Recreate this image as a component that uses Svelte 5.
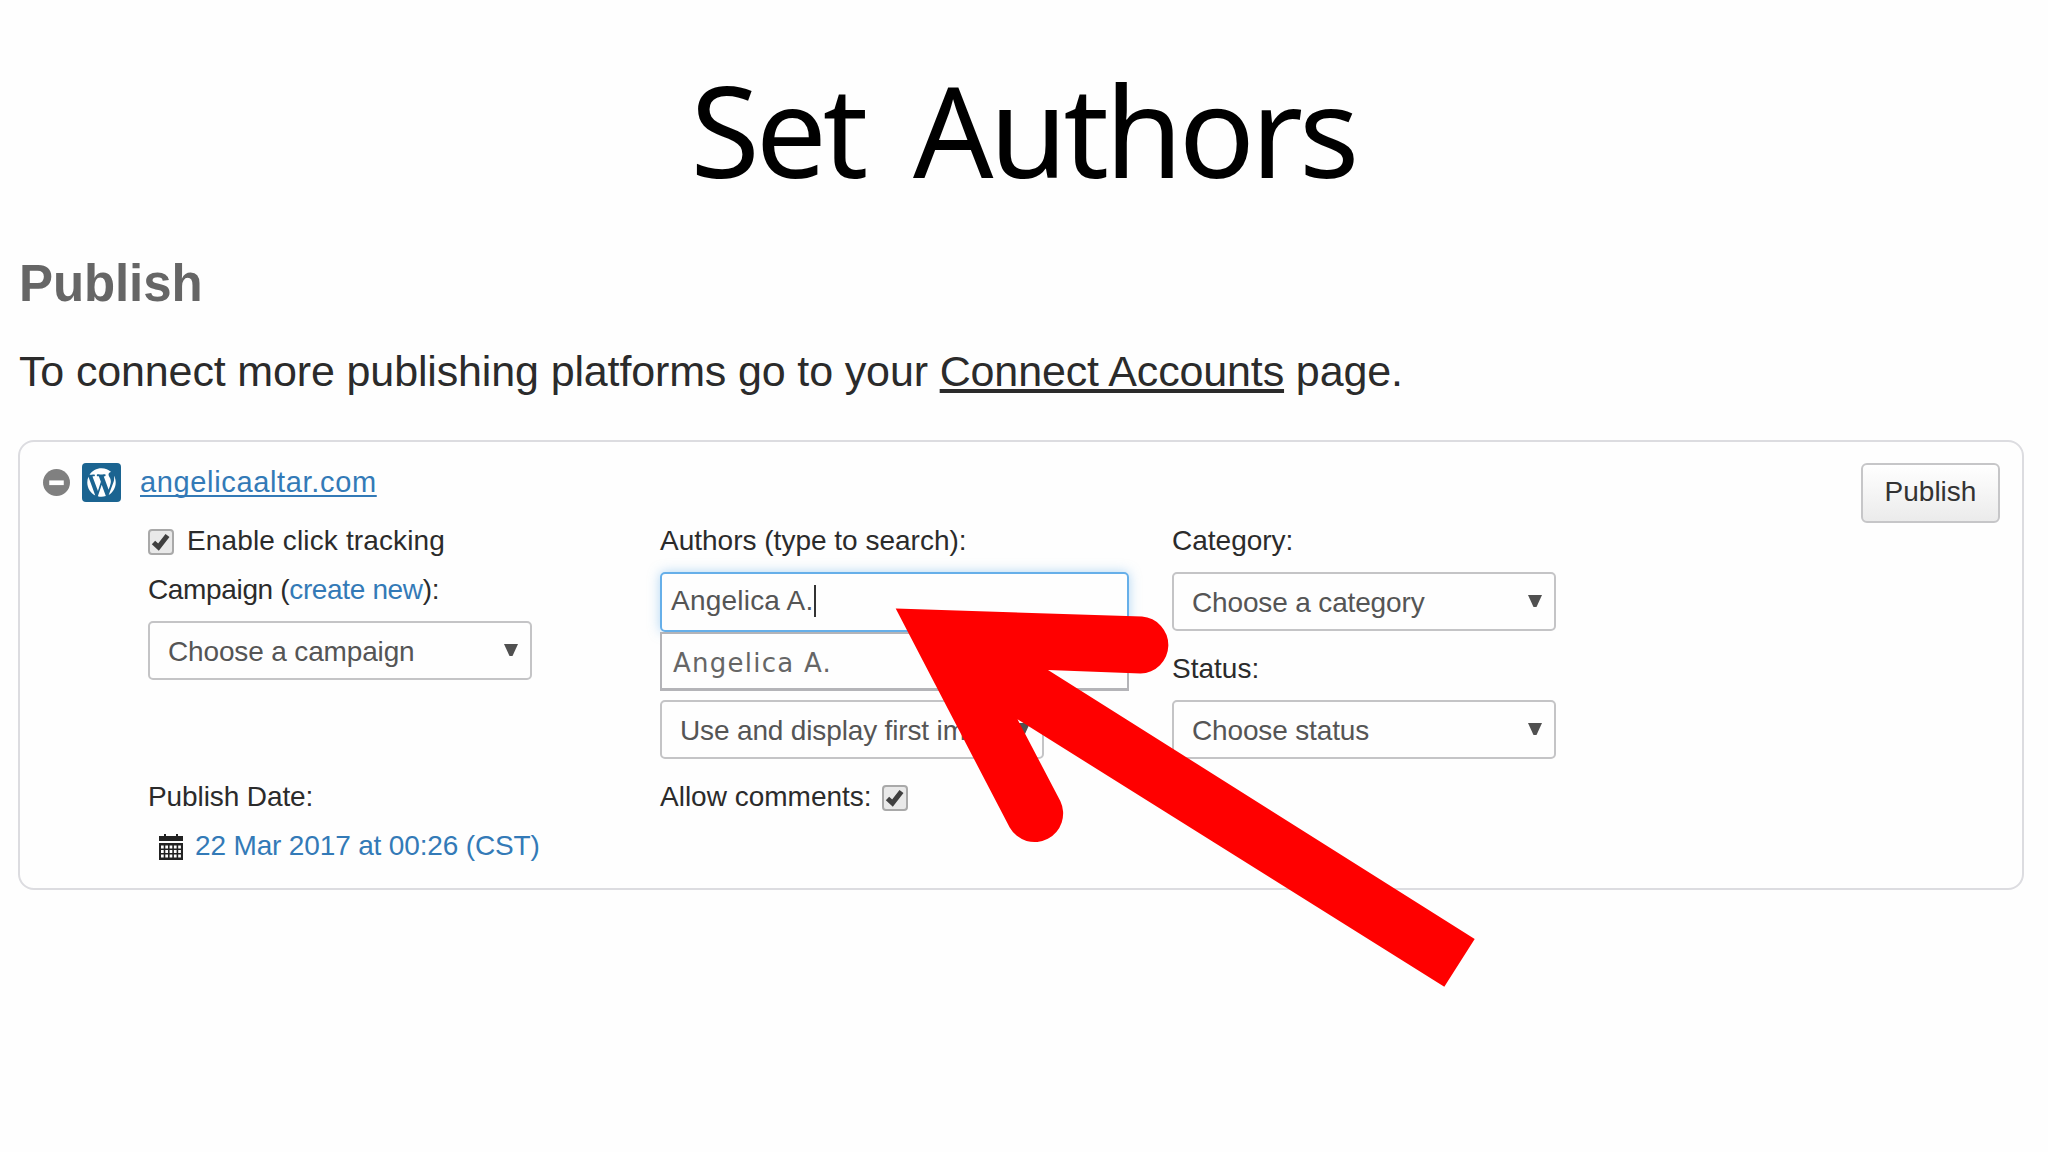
<script>
  let authorQuery = $state("Angelica A.");
  let suggestions = ["Angelica A."];
</script>

{#snippet checkbox()}
  <svg class="checkbox" viewBox="0 0 26 26">
    <rect x="1" y="1" width="24" height="24" rx="3" />
    <path d="M5.5 13.5 L10.5 18 L19.5 6.5" />
  </svg>
{/snippet}

{#snippet select(text)}
  <div class="select">
    <span>{text}</span>
    <svg class="caret" viewBox="0 0 14 12"><path d="M0 0H14L8.5 12H5.5Z" /></svg>
  </div>
{/snippet}

<div class="slide">
  <h1>Set Authors</h1>
  <h2>Publish</h2>
  <p class="intro">
    To connect more publishing platforms go to your <a href="#accounts">Connect Accounts</a> page.
  </p>

  <section class="card">
    <div class="head">
      <div class="site">
        <svg class="minus" viewBox="0 0 26 26">
          <circle cx="13" cy="13" r="13" />
          <rect x="6" y="11" width="14" height="4.5" />
        </svg>
        <svg class="wp" viewBox="0 0 39 39">
          <rect width="39" height="39" rx="4" />
          <g transform="translate(3.5 3.5) scale(1.6)">
            <path d="M7.78 15.37L4.37 6.22c.55-.02 1.17-.08 1.17-.08.5-.06.44-1.13-.06-1.11 0 0-1.45.11-2.37.11-.18 0-.37 0-.58-.01C4.12 2.69 6.87 1.11 10 1.11c2.33 0 4.45.87 6.05 2.34-.68-.11-1.65.39-1.65 1.58 0 .74.45 1.36.9 2.1.35.61.55 1.36.55 2.46 0 1.49-1.4 5-1.4 5l-3.03-8.37c.54-.02.82-.17.82-.17.5-.05.44-1.25-.06-1.22 0 0-1.44.12-2.38.12-.87 0-2.33-.12-2.33-.12-.5-.03-.56 1.2-.06 1.22l.92.08 1.26 3.41z" />
            <path d="M17.41 10c.24-.64.74-1.87.43-4.25.7 1.29 1.05 2.71 1.05 4.25 0 3.29-1.73 6.24-4.4 7.78.97-2.59 1.94-5.2 2.92-7.78z" />
            <path d="M6.1 18.09C3.12 16.65 1.11 13.53 1.11 10c0-1.3.23-2.48.72-3.59C3.25 10.3 4.67 14.2 6.1 18.09z" />
            <path d="M10.13 11.46l2.58 6.98c-.86.29-1.76.45-2.71.45-.79 0-1.57-.11-2.29-.33.81-2.38 1.62-4.74 2.42-7.1z" />
          </g>
        </svg>
        <a class="domain" href="#site">angelicaaltar.com</a>
      </div>
      <button class="publish">Publish</button>
    </div>

    <div class="columns">
      <div class="column">
        <label class="line tracking">{@render checkbox()}<span>Enable click tracking</span></label>
        <div class="line campaign">Campaign (<a href="#new">create new</a>):</div>
        {@render select("Choose a campaign")}
        <div class="line date-label">Publish Date:</div>
        <div class="line date">
          <svg class="calendar" viewBox="0 0 24 26">
            <path d="M0 2H5V0H7V2H17V0H19V2H24V7H0Z" />
            <rect y="9" width="24" height="17" />
            {#each [11.5, 16, 20.5] as y}
              {#each [2, 6.3, 10.6, 14.9, 19.2] as x}
                <rect class="day" {x} {y} width="2.7" height="3" />
              {/each}
            {/each}
          </svg>
          <a href="#date">22 Mar 2017 at 00:26 (CST)</a>
        </div>
      </div>

      <div class="column">
        <div class="line">Authors (type to search):</div>
        <div class="author-input"><span>{authorQuery}</span><i></i></div>
        <div class="suggestions">
          {#each suggestions as name}
            <div>{name}</div>
          {/each}
        </div>
        {@render select("Use and display first image")}
        <label class="line comments"><span>Allow comments:</span>{@render checkbox()}</label>
      </div>

      <div class="column">
        <div class="line">Category:</div>
        {@render select("Choose a category")}
        <div class="line status">Status:</div>
        {@render select("Choose status")}
      </div>
    </div>
  </section>

  <!-- arrow pointing at the author field -->
  <svg class="arrow" viewBox="0 0 2048 1152">
    <path d="M895.7 608.5L1142 616.5A28.6 28.6 0 0 1 1140.5 673.6L1048 670L1474.7 939L1444.3 986.7L1017.5 719.3L1060.3 801A28.6 28.6 0 0 1 1009.7 827.6Z" />
  </svg>
</div>

<style>
  :global(body) {
    margin: 0;
    background: #fefefe;
  }

  .slide {
    position: relative;
    box-sizing: border-box;
    width: 2048px;
    height: 1152px;
    padding: 65px 24px 0 18px;
    overflow: hidden;
    font-family: "Liberation Sans", Arial, sans-serif;
    font-size: 28px;
    color: #2b2b2b;
  }

  h1 {
    margin: 0;
    padding-left: 4px;
    font: 400 126px/128px "Noto Sans", "Open Sans", sans-serif;
    letter-spacing: -4px;
    word-spacing: 20px;
    text-align: center;
    color: #000;
  }

  h2 {
    margin: 61px 0 0;
    padding-left: 1px;
    font-size: 51px;
    line-height: 60px;
    letter-spacing: -0.1px;
    color: #666;
  }

  .intro {
    margin: 27px 0 39px;
    padding-left: 1px;
    font-size: 43px;
    line-height: 60px;
    letter-spacing: -0.14px;
    white-space: nowrap;
  }

  .card {
    box-sizing: border-box;
    height: 450px;
    padding: 21px 22px 0;
    border: 2px solid #dcdce0;
    border-radius: 16px;
  }

  .head {
    display: flex;
    justify-content: space-between;
    height: 58px;
  }

  .site {
    display: flex;
    align-items: center;
    height: 39px;
    margin-left: 1px;
  }

  .minus {
    width: 27px;
    height: 27px;
    fill: #808080;
  }

  .minus rect {
    fill: #fff;
  }

  .wp {
    width: 39px;
    height: 39px;
    margin: 0 19px 0 12px;
    fill: #fff;
  }

  .wp > rect {
    fill: #1b6491;
  }

  a {
    color: #337ab7;
    text-decoration: none;
  }

  .intro a {
    color: inherit;
    text-decoration: underline;
    text-decoration-thickness: 4px;
    text-underline-offset: 3px;
    text-decoration-skip-ink: none;
  }

  .domain {
    font-size: 29px;
    letter-spacing: 0.65px;
    text-decoration: underline;
    text-decoration-thickness: 2px;
    text-underline-offset: 3px;
    text-decoration-skip-ink: none;
  }

  .publish {
    box-sizing: border-box;
    width: 139px;
    height: 60px;
    padding: 0 0 2px;
    border: 2px solid #c6c6c8;
    border-radius: 6px;
    background: linear-gradient(#fff, #ebebeb);
    font: inherit;
    color: #333;
  }

  .columns {
    display: flex;
    padding-left: 106px;
  }

  .column {
    width: 512px;
  }

  .line {
    height: 40px;
    line-height: 40px;
    white-space: nowrap;
  }

  .tracking,
  .comments,
  .date {
    display: flex;
    align-items: center;
  }

  .tracking {
    gap: 13px;
    letter-spacing: 0.13px;
  }

  .tracking .checkbox,
  .comments .checkbox {
    margin-top: 2px;
  }

  .campaign {
    margin: 9px 0 11px;
    letter-spacing: -0.35px;
  }

  .date-label {
    margin-top: 97px;
    letter-spacing: -0.1px;
  }

  .date {
    gap: 12px;
    margin-top: 9px;
    padding-left: 11px;
    letter-spacing: -0.15px;
  }

  .checkbox {
    width: 26px;
    height: 26px;
  }

  .checkbox rect {
    fill: #e9e9e9;
    stroke: #a9a9a9;
    stroke-width: 2;
  }

  .checkbox path {
    fill: none;
    stroke: #404040;
    stroke-width: 5;
  }

  .select {
    display: flex;
    align-items: center;
    justify-content: space-between;
    box-sizing: border-box;
    width: 384px;
    height: 59px;
    padding: 2px 12px 0 18px;
    border: 2px solid #c4c4c6;
    border-radius: 5px;
    color: #555;
    letter-spacing: -0.15px;
    white-space: nowrap;
  }

  .caret {
    width: 14px;
    height: 12px;
    margin-top: -4px;
    fill: #505050;
  }

  .calendar {
    width: 24px;
    height: 26px;
    margin-top: 2px;
    fill: #222;
  }

  .calendar .day {
    fill: #fff;
  }

  .line + .author-input,
  .line:first-child + .select {
    margin-top: 11px;
  }

  .author-input {
    display: flex;
    align-items: center;
    box-sizing: border-box;
    width: 469px;
    height: 60px;
    padding: 0 0 3px 9px;
    border: 2px solid #66afe9;
    border-radius: 5px;
    box-shadow: 0 0 12px rgba(102, 175, 233, 0.5);
    color: #555;
    letter-spacing: 0.22px;
  }

  .author-input i {
    width: 2px;
    height: 32px;
    background: #333;
  }

  .suggestions {
    position: relative;
    box-sizing: border-box;
    width: 469px;
    height: 59px;
    margin-bottom: 9px;
    padding-left: 11px;
    border: 2px solid #b4b4b8;
    border-bottom-width: 3px;
    background: #fefefe;
    font: 26px/58px "DejaVu Sans", Verdana, sans-serif;
    letter-spacing: 1.25px;
    color: #666;
  }

  .comments {
    gap: 10px;
    margin-top: 18px;
  }

  .status {
    margin: 18px 0 11px;
  }

  .arrow {
    position: absolute;
    inset: 0;
    width: 2048px;
    height: 1152px;
    fill: #f00;
    pointer-events: none;
  }
</style>
